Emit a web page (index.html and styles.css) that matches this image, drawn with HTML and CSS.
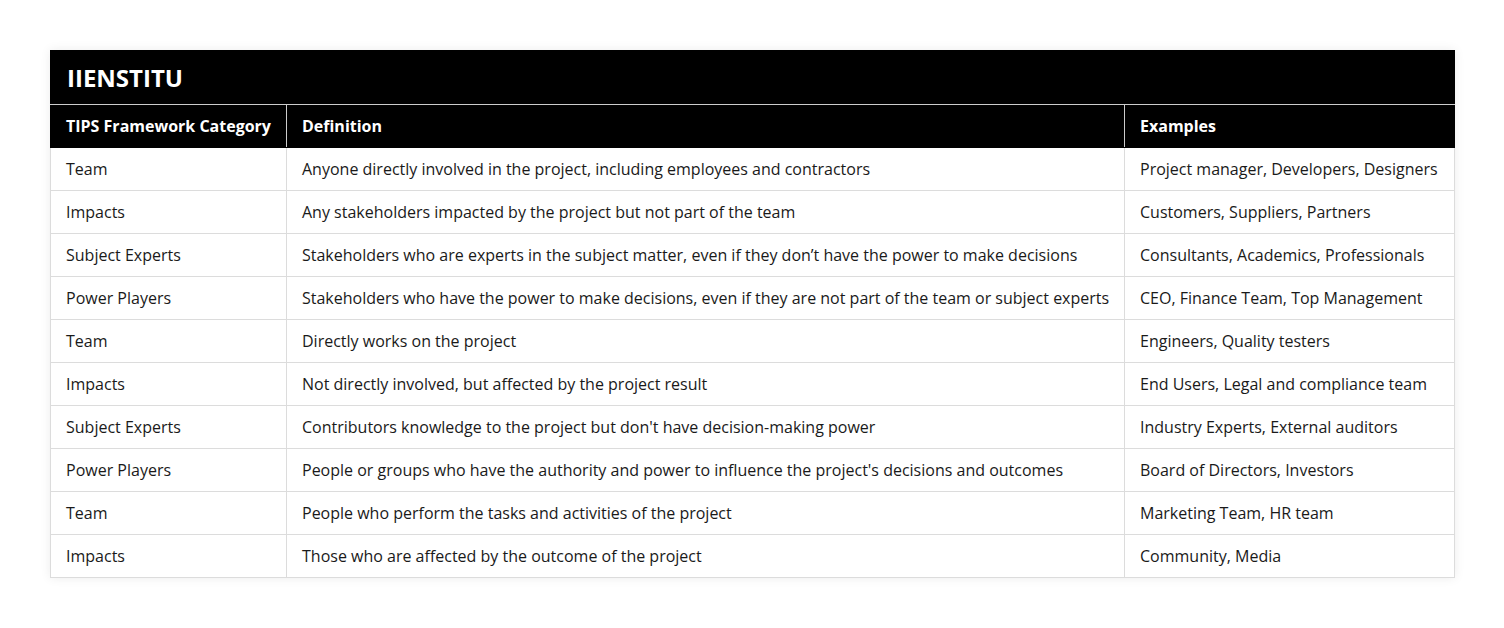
FILE: index.html
```html
<!DOCTYPE html>
<html>
<head>
<meta charset="utf-8">
<link rel="stylesheet" href="styles.css">
</head>
<body>
<div class="wrap">
<table class="tips">
<colgroup><col class="c1"><col class="c2"><col class="c3"></colgroup>
<thead>
<tr class="title"><th colspan="3">IIENSTITU</th></tr>
<tr class="head"><th>TIPS Framework Category</th><th>Definition</th><th>Examples</th></tr>
</thead>
<tbody>
<tr><td>Team</td><td>Anyone directly involved in the project, including employees and contractors</td><td>Project manager, Developers, Designers</td></tr>
<tr><td>Impacts</td><td>Any stakeholders impacted by the project but not part of the team</td><td>Customers, Suppliers, Partners</td></tr>
<tr><td>Subject Experts</td><td>Stakeholders who are experts in the subject matter, even if they don’t have the power to make decisions</td><td>Consultants, Academics, Professionals</td></tr>
<tr><td>Power Players</td><td>Stakeholders who have the power to make decisions, even if they are not part of the team or subject experts</td><td>CEO, Finance Team, Top Management</td></tr>
<tr><td>Team</td><td>Directly works on the project</td><td>Engineers, Quality testers</td></tr>
<tr><td>Impacts</td><td>Not directly involved, but affected by the project result</td><td>End Users, Legal and compliance team</td></tr>
<tr><td>Subject Experts</td><td>Contributors knowledge to the project but don't have decision-making power</td><td>Industry Experts, External auditors</td></tr>
<tr><td>Power Players</td><td>People or groups who have the authority and power to influence the project's decisions and outcomes</td><td>Board of Directors, Investors</td></tr>
<tr><td>Team</td><td>People who perform the tasks and activities of the project</td><td>Marketing Team, HR team</td></tr>
<tr><td>Impacts</td><td>Those who are affected by the outcome of the project</td><td>Community, Media</td></tr>
</tbody>
</table>
</div>
</body>
</html>
```

FILE: styles.css
```css
html, body {
  margin: 0;
  padding: 0;
  background: #fff;
}
.wrap {
  padding: 50px;
}
.tips {
  width: 1404px;
  border-collapse: collapse;
  table-layout: fixed;
  font-family: "Open Sans", "Liberation Sans", sans-serif;
  font-size: 16px;
  color: #1a1a1a;
  box-shadow: 0 0 10px rgba(0,0,0,0.08);
}
.c1 { width: 236px; }
.c2 { width: 838px; }
.c3 { width: 330px; }
.tips th, .tips td {
  text-align: left;
  padding: 0 15px;
  border: 1px solid #dcdcdc;
  white-space: nowrap;
}
.tips td {
  height: 42px;
}
.title th {
  background: #000;
  color: #fff;
  font-size: 24px;
  font-weight: 700;
  height: 53px;
  padding: 0 16px;
  border-color: #000;
  border-bottom: 1px solid #ccc;
}
.head th {
  background: #000;
  color: #fff;
  font-weight: 700;
  height: 42px;
  border-color: #000;
  border-right: 1px solid #ccc;
}
.head th:last-child {
  border-right-color: #000;
}
```
